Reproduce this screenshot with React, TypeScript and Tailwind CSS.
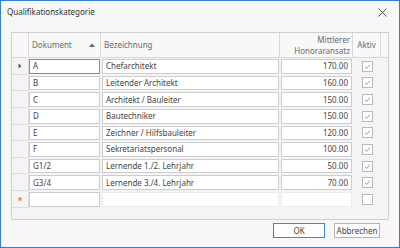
import React from 'react';

const rows = [
  { doc: 'A', name: 'Chefarchitekt', rate: '170.00' },
  { doc: 'B', name: 'Leitender Architekt', rate: '160.00' },
  { doc: 'C', name: 'Architekt / Bauleiter', rate: '150.00' },
  { doc: 'D', name: 'Bautechniker', rate: '150.00' },
  { doc: 'E', name: 'Zeichner / Hilfsbauleiter', rate: '120.00' },
  { doc: 'F', name: 'Sekretariatspersonal', rate: '100.00' },
  { doc: 'G1/2', name: 'Lernende 1./2. Lehrjahr', rate: '50.00' },
  { doc: 'G3/4', name: 'Lernende 3./4. Lehrjahr', rate: '70.00' },
];

const cols = 'grid grid-cols-[17px_72px_179px_73px_28px_1fr]';

function Check({ checked }: { checked: boolean }) {
  return (
    <div className="w-[11px] h-[11px] border border-[#b9b9b9] bg-white flex items-center justify-center">
      {checked && (
        <svg width="9" height="9" viewBox="0 0 9 9">
          <path d="M1.8 4.6 L3.6 6.3 L7.2 2.6" fill="none" stroke="#8c8c8c" strokeWidth="0.9" />
        </svg>
      )}
    </div>
  );
}

export default function App() {
  return (
    <div
      className="w-[400px] h-[248px] border border-[#2e7fd6] bg-[#f7f7f7] flex flex-col text-[#444]"
      style={{ fontFamily: '"Noto Sans", "Open Sans", sans-serif' }}
    >
      {/* Title bar */}
      <div className="h-[31px] flex items-start justify-between pl-[6px] pr-[12px] pt-[5px]">
        <span className="text-[8px] text-[#333]">Qualifikationskategorie</span>
        <svg width="9" height="9" viewBox="0 0 9 9" className="mt-[2px]">
          <path d="M0.5 0.5 L8.5 8.5 M8.5 0.5 L0.5 8.5" stroke="#444" strokeWidth="0.9" />
        </svg>
      </div>

      {/* Grid */}
      <div className="ml-[10px] w-[378px] h-[188px] border border-[#cfcfcf] bg-[#f4f4f4] flex flex-col">
        {/* Header */}
        <div className={`${cols} h-[25px] bg-[#f8f8f8] border-b border-[#d8d8d8] text-[8px] text-[#6a6a6a]`}>
          <div className="border-r border-[#d8d8d8]" />
          <div className="border-r border-[#d8d8d8] flex items-center justify-between pl-[3px] pr-[5px]">
            <span>Dokument</span>
            <svg width="6" height="4" viewBox="0 0 6 4">
              <path d="M0 4 L3 0.5 L6 4 Z" fill="#666" />
            </svg>
          </div>
          <div className="border-r border-[#d8d8d8] flex items-center pl-[3px]">Bezeichnung</div>
          <div className="border-r border-[#d8d8d8] flex flex-col items-end justify-center pr-[2px] leading-[11px]">
            <span>Mittlerer</span>
            <span>Honoraransatz</span>
          </div>
          <div className="border-r border-[#d8d8d8] flex items-center justify-center">Aktiv</div>
          <div />
        </div>

        {/* Body */}
        {rows.map((r, i) => (
          <div key={r.doc} className={`${cols} h-[16.625px] text-[8px]`}>
            <div className="border-r border-b border-[#dedede] flex items-center justify-center">
              {i === 0 && (
                <svg width="4" height="6" viewBox="0 0 4 6">
                  <path d="M0.5 0.5 L3.5 3 L0.5 5.5 Z" fill="#555" />
                </svg>
              )}
            </div>
            <div className="pr-[1px] py-[1px]">
              <div
                className={`h-full bg-white border ${i === 0 ? 'border-[#8a8a8a]' : 'border-[#cdcdcd]'} flex items-center pl-[3px]`}
              >
                {r.doc}
              </div>
            </div>
            <div className="pl-[1px] pr-[1px] py-[1px]">
              <div className="h-full bg-white border border-[#cdcdcd] flex items-center pl-[3px]">{r.name}</div>
            </div>
            <div className="pl-[1px] pr-[1px] py-[1px]">
              <div className="h-full bg-white border border-[#cdcdcd] flex items-center justify-end pr-[3px]">
                {r.rate}
              </div>
            </div>
            <div className="flex items-center justify-center">
              <Check checked />
            </div>
            <div />
          </div>
        ))}

        {/* New row */}
        <div className={`${cols} h-[16.625px] text-[8px]`}>
          <div className="border-r border-b border-[#dedede] flex items-center justify-center">
            <div className="w-[4px] h-[4px] rounded-full bg-[#f39a3a]" />
          </div>
          <div className="pr-[1px] py-[1px]">
            <div className="h-full bg-white border border-[#cdcdcd]" />
          </div>
          <div className="pl-[1px] pr-[1px] py-[1px]">
            <div className="h-full bg-white border border-[#ececec]" />
          </div>
          <div className="pl-[1px] pr-[1px] py-[1px]">
            <div className="h-full bg-white border border-[#ececec]" />
          </div>
          <div className="flex items-center justify-center">
            <Check checked={false} />
          </div>
          <div />
        </div>
      </div>

      {/* Buttons */}
      <div className="flex justify-end gap-[9px] pr-[19px] pt-[3px] text-[8px]">
        <button className="w-[52px] h-[15px] border border-[#3b86d8] bg-[#fdfdfd] flex items-center justify-center">
          OK
        </button>
        <button className="w-[46px] h-[15px] border border-[#b4b4b4] bg-[#fdfdfd] flex items-center justify-center">
          Abbrechen
        </button>
      </div>
    </div>
  );
}
